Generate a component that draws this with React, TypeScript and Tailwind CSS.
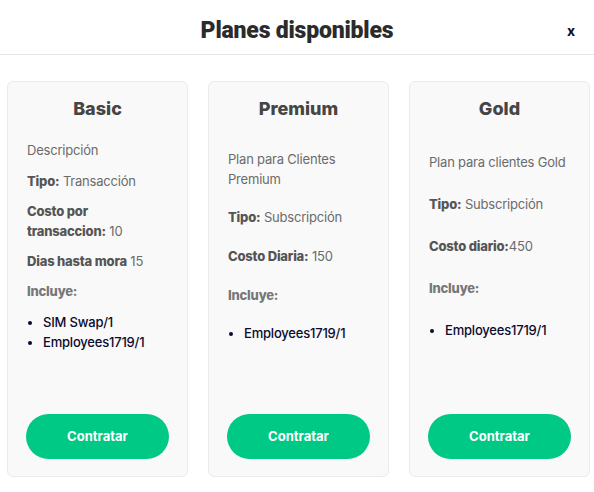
import React from "react";

type Plan = {
  name: string;
  description: string;
  rows: { label: React.ReactNode; key: string; value: string; tight?: boolean }[];
  includes: string[];
};

const plans: Plan[] = [
  {
    name: "Basic",
    description: "Descripción",
    rows: [
      { key: "tipo", label: "Tipo:", value: "Transacción" },
      {
        key: "costo",
        label: (
          <>
            Costo por
            <br />
            transaccion:
          </>
        ),
        value: "10",
      },
      { key: "mora", label: "Dias hasta mora", value: "15" },
    ],
    includes: ["SIM Swap/1", "Employees1719/1"],
  },
  {
    name: "Premium",
    description: "Plan para Clientes Premium",
    rows: [
      { key: "tipo", label: "Tipo:", value: "Subscripción" },
      { key: "costo", label: "Costo Diaria:", value: "150" },
    ],
    includes: ["Employees1719/1"],
  },
  {
    name: "Gold",
    description: "Plan para clientes Gold",
    rows: [
      { key: "tipo", label: "Tipo:", value: "Subscripción" },
      { key: "costo", label: "Costo diario:", value: "450", tight: true },
    ],
    includes: ["Employees1719/1"],
  },
];

function PlanCard({ plan }: { plan: Plan }) {
  return (
    <div className="flex h-[396px] w-[181px] shrink-0 flex-col rounded-md border border-[#ebebeb] bg-[#f9f9f9] pt-[15px] pb-[17px]">
      <h3 className="text-center text-[18px] leading-6 font-extrabold text-[#454545]">
        {plan.name}
      </h3>

      <div className="mt-[9px] flex h-[232px] flex-col justify-evenly pr-[10px] pl-[19px] text-[13px] leading-5 tracking-[-0.2px] text-[#6b6b6b]">
        <p>{plan.description}</p>
        {plan.rows.map((row) => (
          <p key={row.key}>
            <span className="font-extrabold text-[#555]">{row.label}</span>
            {row.tight ? "" : " "}
            {row.value}
          </p>
        ))}
        <p className="font-extrabold text-[#777]">Incluye:</p>
        <ul className="list-disc pl-4 font-medium text-[#0b0b2e]">
          {plan.includes.map((item) => (
            <li key={item}>{item}</li>
          ))}
        </ul>
      </div>

      <button
        type="button"
        className="mx-auto mt-auto h-[45px] w-[143px] rounded-full bg-[#00c985] text-[13px] font-bold text-white"
      >
        Contratar
      </button>
    </div>
  );
}

export default function App() {
  return (
    <div
      className="h-[492px] w-[594px] overflow-hidden bg-white"
      style={{ fontFamily: "Inter, 'Noto Sans', sans-serif" }}
    >
      <div className="relative flex h-[55px] items-center justify-center border-b border-[#e6e6e6]">
        <h2
          className="pt-[8px] text-[23px] tracking-[-0.2px] text-[#2b2b2b]"
          style={{ fontFamily: "Roboto, Inter, sans-serif", fontWeight: 900 }}
        >
          Planes disponibles
        </h2>
        <button
          type="button"
          className="absolute top-[24px] right-[19px] text-[14px] leading-none font-bold text-[#0b0b2e]"
        >
          x
        </button>
      </div>

      <div className="flex gap-5 pt-[26px] pl-[7px]">
        {plans.map((plan) => (
          <PlanCard key={plan.name} plan={plan} />
        ))}
      </div>
    </div>
  );
}
